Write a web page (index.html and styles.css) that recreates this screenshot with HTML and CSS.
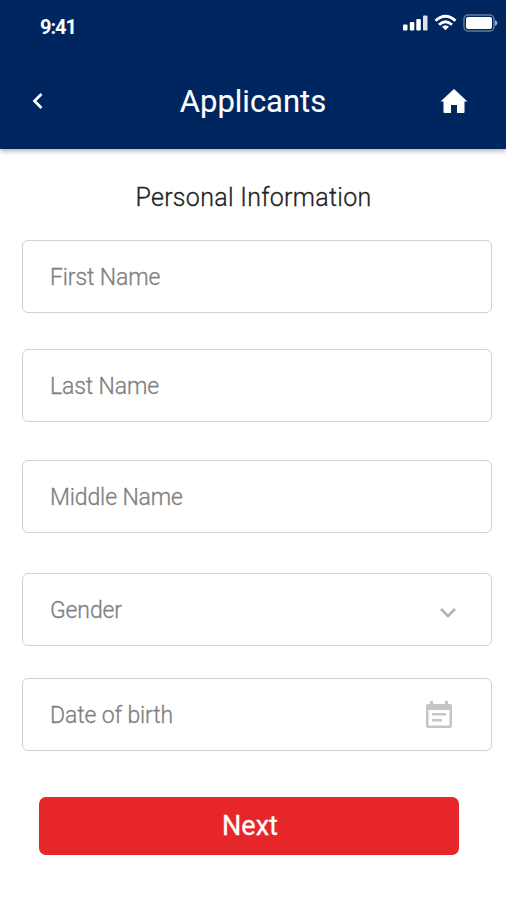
FILE: index.html
```
<!DOCTYPE html>
<html lang="en">
<head>
<meta charset="utf-8">
<title>Applicants</title>
<link rel="stylesheet" href="styles.css">
</head>
<body>
<header class="header">
  <div class="status">
    <span class="time">9:41</span>
    <svg class="indicators" width="95" height="20" viewBox="0 0 95 20" fill="#fff">
      <rect x="0" y="11.500" width="4.500" height="6" rx="1"/>
      <rect x="6.800" y="9" width="4.500" height="8.500" rx="1"/>
      <rect x="13.300" y="6" width="4.500" height="11.500" rx="1"/>
      <rect x="20" y="2.500" width="4.500" height="15" rx="1" fill="#dde1e8"/>
      <g fill="none" stroke="#fff" stroke-width="2.800">
        <path d="M32.500 7.800Q42.500 -1.300 52.500 7.800"/>
        <path d="M36 11.800Q42.500 5.500 49 11.800"/>
      </g>
      <path d="M39 13.800Q42.500 10.800 46 13.800L42.500 17.300Z"/>
      <rect x="61" y="2" width="30" height="16" rx="4" fill="none" stroke="#66799b" stroke-width="1.500"/>
      <rect x="63" y="4" width="26" height="12" rx="2"/>
      <path d="M92 7Q97 10 92 13Z" fill="#a0aec4"/>
    </svg>
  </div>
  <div class="bar">
    <svg class="back" width="12" height="18" viewBox="0 0 12 18"><path d="M9.500 2L2.500 9L9.500 16" fill="none" stroke="#fff" stroke-width="2.700"/></svg>
    <h1 class="title">Applicants</h1>
    <svg class="home" width="28" height="26" viewBox="0 0 28 26"><path d="M11 25V17H17V25H23.500Q24.500 25 24.500 24V13.500H27.500L14 1L.5 13.500H3.500V24Q3.500 25 4.500 25Z" fill="#fff"/></svg>
  </div>
</header>
<main class="form">
  <h2 class="heading">Personal Information</h2>
  <div class="field first"><span>First Name</span></div>
  <div class="field last"><span>Last Name</span></div>
  <div class="field middle"><span>Middle Name</span></div>
  <div class="field gender"><span>Gender</span>
    <svg class="chevron" width="18" height="12" viewBox="0 0 18 12"><path d="M2 2L9 9L16 2" fill="none" stroke="#b4b4b4" stroke-width="2.800"/></svg>
  </div>
  <div class="field birth"><span>Date of birth</span>
    <svg class="calendar" width="28" height="30" viewBox="0 0 28 30" fill="#c5c5c5"><path fill-rule="evenodd" d="M5 1H8V4H20V1H23V4H25Q27 4 27 6V26Q27 28 25 28H3Q1 28 1 26V6Q1 4 3 4H5ZM3.500 10V25.500H24.500V10Z"/><path d="M7 13H21V15.500H7ZM7 19H17V21.500H7Z"/></svg>
  </div>
  <button class="next">Next</button>
</main>
</body>
</html>
```
FILE: styles.css
```
* { box-sizing: border-box; }
body { margin: 0; background: #fff; font-family: Roboto, sans-serif; }
.header { height: 149px; background: #00265f; color: #fff; box-shadow: 0 2px 5px rgba(40,20,20,.35); }
.status { height: 52px; padding: 13px 8px 0 40px; display: flex; justify-content: space-between; }
.time { font-size: 20px; line-height: 28px; font-weight: 700; letter-spacing: -1px; }
.bar { height: 97px; display: grid; grid-template-columns: 100px 1fr 100px; align-items: center; }
.back { margin-left: 32px; }
.title { margin: 0; padding-top: 1px; text-align: center; font-size: 31px; font-weight: 400; -webkit-text-stroke: .1px #fff; }
.home { margin-left: 34px; }
.form { padding: 29px 14px 0 22px; display: flex; flex-direction: column; }
.heading { margin: 0 7px 22px 0; font-size: 25px; line-height: 40px; font-weight: 300; letter-spacing: .3px; color: #222; -webkit-text-stroke: .3px #222; text-align: center; white-space: nowrap; }
.field { height: 73px; border: 1px solid #d0d0d0; border-radius: 6px; padding: 2px 38px 0 27px; display: flex; align-items: center; justify-content: space-between; font-size: 23px; font-weight: 300; letter-spacing: -.13px; color: #808080; -webkit-text-stroke: .3px #808080; }
.last { margin-top: 36px; }
.middle { margin-top: 38px; }
.gender { margin-top: 40px; padding-right: 34px; }
.birth { margin-top: 32px; }
.chevron { margin-top: 4px; }
.calendar { margin-top: -2px; }
.next { width: 420px; height: 58px; margin: 46px 0 0 17px; padding: 0 0 0 2px; border: 0; border-radius: 7px; background: #e62629; color: #fff; font: 400 27px Roboto, sans-serif; -webkit-text-stroke: .3px #fff; }
```
